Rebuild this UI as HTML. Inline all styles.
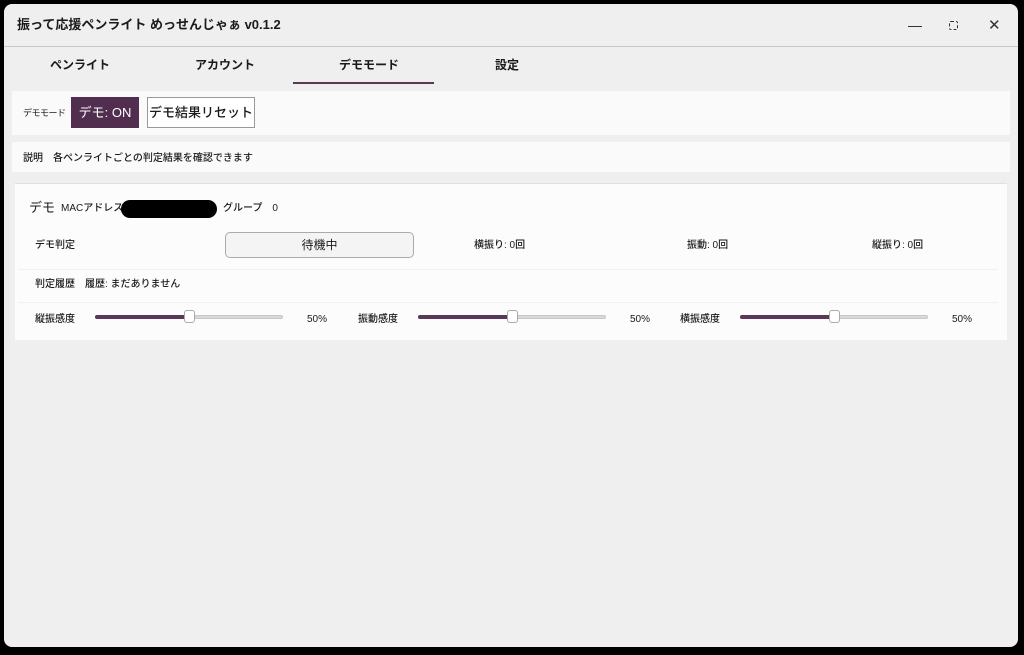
<!DOCTYPE html>
<html><head><meta charset="utf-8"><style>
*{box-sizing:border-box;margin:0;padding:0}
body{width:1024px;height:655px;background:#000;position:relative;overflow:hidden;font-family:"Liberation Sans","Noto Sans CJK JP",sans-serif;color:#1a1a1a}
.win{position:absolute;left:4px;top:4px;width:1014px;height:643px;background:#efefef;border-radius:8px;overflow:hidden}
.abs{position:absolute;white-space:nowrap;line-height:1}
.t{font-size:12px}
.s{font-size:10px;font-weight:500}
.panel{position:absolute;background:#fafafa}
.track{position:absolute;height:4px;background:#d8d8d8;border-radius:2px;border:1px solid #c8c8c8}
.fill{position:absolute;height:4px;background:#5a3858;border-radius:2px}
.thumb{position:absolute;width:11px;height:13px;background:#fff;border:1px solid #aaa;border-radius:3px}
</style></head><body>
<div class="win">
<div class="abs" style="left:13px;top:14px;font-size:13px;font-weight:bold">振って応援ペンライト めっせんじゃぁ v0.1.2</div>
<div class="abs" style="left:904px;top:22px;width:14px;height:1px;background:#333"></div>
<div class="abs" style="left:945px;top:17px;width:9px;height:9px;border:1.5px dashed #333;border-radius:2px"></div>
<div class="abs" style="left:984px;top:14px;font-size:15px;color:#333">✕</div>
<div class="abs" style="left:0;top:42px;width:1014px;height:1px;background:#c8c8c8"></div>
<div class="abs t" style="left:46px;top:55px;font-weight:bold">ペンライト</div>
<div class="abs t" style="left:191px;top:55px;font-weight:bold">アカウント</div>
<div class="abs t" style="left:335px;top:55px;font-weight:bold">デモモード</div>
<div class="abs t" style="left:491px;top:55px;font-weight:bold">設定</div>
<div class="abs" style="left:289px;top:78px;width:141px;height:2px;background:#5a3858"></div>
<div class="panel" style="left:8px;top:87px;width:998px;height:44px"></div>
<div class="abs" style="left:19px;top:105px;font-size:9px;letter-spacing:-0.5px">デモモード</div>
<div class="abs" style="left:67px;top:93px;width:68px;height:31px;background:#512e50;color:#fff;font-size:13px;text-align:center;line-height:31px">デモ: ON</div>
<div class="abs" style="left:143px;top:93px;width:108px;height:31px;background:#fff;border:1px solid #999;font-size:13px;text-align:center;line-height:29px;font-weight:500">デモ結果リセット</div>
<div class="panel" style="left:8px;top:138px;width:998px;height:30px"></div>
<div class="abs s" style="left:19px;top:150px">説明　各ペンライトごとの判定結果を確認できます</div>
<div class="panel" style="left:11px;top:179px;width:992px;height:157px;border-top:1px solid #e0e0e0;background:#fcfcfc"></div>
<div class="abs" style="left:25px;top:197px;font-size:13px">デモ</div>
<div class="abs s" style="left:57px;top:200px">MACアドレス</div>
<div class="abs" style="left:117px;top:196px;width:96px;height:18px;background:#000;border-radius:9px"></div>
<div class="abs s" style="left:219px;top:200px">グループ　0</div>
<div class="abs s" style="left:31px;top:237px">デモ判定</div>
<div class="abs" style="left:221px;top:228px;width:189px;height:26px;background:#f4f4f4;border:1px solid #aaa;border-radius:5px;font-size:12px;text-align:center;line-height:24px">待機中</div>
<div class="abs s" style="left:470px;top:237px">横振り: 0回</div>
<div class="abs s" style="left:683px;top:237px">振動: 0回</div>
<div class="abs s" style="left:868px;top:237px">縦振り: 0回</div>
<div class="abs" style="left:14px;top:265px;width:980px;height:1px;background:#f0f0f0"></div>
<div class="abs s" style="left:31px;top:276px">判定履歴　履歴: まだありません</div>
<div class="abs" style="left:14px;top:298px;width:980px;height:1px;background:#f0f0f0"></div>
<div class="abs s" style="left:31px;top:311px">縦振感度</div>
<div class="track" style="left:91px;top:311px;width:188px"></div><div class="fill" style="left:91px;top:311px;width:96px"></div><div class="thumb" style="left:180px;top:306px"></div>
<div class="abs s" style="left:303px;top:311px">50%</div>
<div class="abs s" style="left:354px;top:311px">振動感度</div>
<div class="track" style="left:414px;top:311px;width:188px"></div><div class="fill" style="left:414px;top:311px;width:96px"></div><div class="thumb" style="left:503px;top:306px"></div>
<div class="abs s" style="left:626px;top:311px">50%</div>
<div class="abs s" style="left:676px;top:311px">横振感度</div>
<div class="track" style="left:736px;top:311px;width:188px"></div><div class="fill" style="left:736px;top:311px;width:96px"></div><div class="thumb" style="left:825px;top:306px"></div>
<div class="abs s" style="left:948px;top:311px">50%</div>
</div>
</body></html>
